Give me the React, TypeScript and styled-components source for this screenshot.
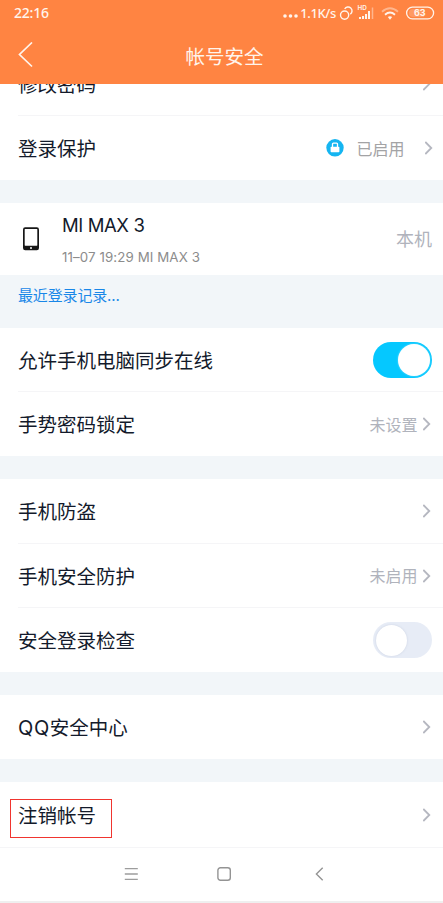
import React from 'react';
import styled, { createGlobalStyle } from 'styled-components';

const GlobalStyle = createGlobalStyle`
  * { box-sizing: border-box; }
  body {
    margin: 0;
    background: #f2f6f9;
    font-family: Inter, "Noto Sans CJK SC", sans-serif;
    color: #131a2b;
  }
  svg { display: block; flex: none; }
`;

const Screen = styled.div`
  width: 443px;
  height: 903px;
  overflow: hidden;
  display: flex;
  flex-direction: column;
`;

const Header = styled.header`
  flex: none;
  height: 84px;
  background: #ff8442;
  color: #fff4ec;
`;

const StatusBar = styled.div`
  height: 26px;
  padding: 0 7px 0 14px;
  display: flex;
  align-items: center;
  justify-content: space-between;
`;

const Clock = styled.span`
  font: 500 14px/26px "Noto Sans", sans-serif;
  letter-spacing: -0.2px;
`;

const StatusIcons = styled.div`
  display: flex;
  align-items: center;
`;

const Speed = styled.span`
  margin: 0 3px 0 1px;
  font: 500 13px/26px "Noto Sans", sans-serif;
  letter-spacing: -0.35px;
`;

const TitleBar = styled.div`
  height: 58px;
  padding: 0 18px;
  display: grid;
  grid-template-columns: 40px 1fr 40px;
  align-items: center;
`;

const Title = styled.h1`
  margin: 3px 0 0 6px;
  text-align: center;
  font-size: 19.5px;
  line-height: 28px;
  font-weight: 400;
`;

const ClippedRow = styled.div`
  flex: none;
  height: 31px;
  display: flex;
  flex-direction: column;
  justify-content: flex-end;
  overflow: hidden;
  background: #fff;
`;

const Group = styled.section<{ $gap?: number }>`
  flex: none;
  background: #fff;
  margin-bottom: ${({ $gap = 0 }) => $gap}px;
`;

const Row = styled.div<{ $height?: number }>`
  flex: none;
  height: ${({ $height = 64 }) => $height}px;
  padding: 0 12px 0 18px;
  display: flex;
  align-items: center;
  justify-content: space-between;
`;

const FirstRow = styled(Row)`
  height: 62px;
`;

const Divider = styled.div<{ $full?: boolean }>`
  height: 1px;
  margin-left: ${({ $full }) => ($full ? 0 : 18)}px;
  background: #f5f5f7;
`;

const Label = styled.span`
  padding-top: 2px;
  font-size: 19.5px;
  line-height: 28px;
  white-space: nowrap;
`;

const Latin = styled.span`
  font-size: 20px;
  letter-spacing: 0.6px;
`;

const Trailing = styled.div<{ $shift?: number }>`
  display: flex;
  align-items: center;
  margin-right: ${({ $shift = 0 }) => -$shift}px;
`;

const Value = styled.span<{ $before?: number; $gap?: number; $size?: number; $warm?: boolean }>`
  padding-top: 1px;
  font-size: ${({ $size = 16 }) => $size}px;
  line-height: 24px;
  color: ${({ $warm }) => ($warm ? '#a3a3a5' : '#b0b3bc')};
  margin: 0 ${({ $gap = 0 }) => $gap}px 0 ${({ $before = 0 }) => $before}px;
`;

const DeviceRow = styled(Row)`
  height: 72px;
  padding: 0 11px 0 22px;
`;

const DeviceInfo = styled.div`
  flex: 1;
  height: 72px;
  padding: 9px 0 0 22px;
`;

const DeviceName = styled.div`
  font-size: 18.5px;
  line-height: 26px;
  letter-spacing: -0.4px;
`;

const DeviceMeta = styled.div`
  margin-top: 7px;
  font-size: 13.3px;
  line-height: 24px;
  letter-spacing: 0.1px;
  color: #8c8c8c;
`;

const RecentLink = styled.a`
  flex: none;
  height: 53px;
  padding: 9px 18px;
  font-size: 15px;
  line-height: 24px;
  letter-spacing: -0.15px;
  color: #1987e8;
`;

const Switch = styled.div<{ $on?: boolean }>`
  width: 59px;
  height: 36px;
  margin-right: -1px;
  padding: ${({ $on }) => ($on ? '2px' : '2.5px')};
  display: flex;
  justify-content: ${({ $on }) => ($on ? 'flex-end' : 'flex-start')};
  border-radius: 18px;
  background: ${({ $on }) => ($on ? '#05c8ff' : '#e7ecf6')};
`;

const Knob = styled.span<{ $on?: boolean }>`
  width: ${({ $on }) => ($on ? 32 : 31)}px;
  height: ${({ $on }) => ($on ? 32 : 31)}px;
  border-radius: 50%;
  background: #fff;
  box-shadow: 0 0 2px ${({ $on }) => ($on ? 'rgba(255,255,255,.5)' : 'rgba(170,180,205,.5)')};
`;

const Highlight = styled.div`
  width: 102px;
  height: 39px;
  margin: 7px 0 0 -8px;
  padding: 0 0 6px 7px;
  display: flex;
  align-items: center;
  border: 1px solid #f0352f;
`;

const NavBar = styled.nav`
  flex: none;
  height: 53px;
  padding: 0 119px 2px 124px;
  display: grid;
  grid-template-columns: 93px 1fr 9px;
  align-items: center;
  background: #fff;
`;

const BottomEdge = styled.div`
  flex: none;
  height: 2px;
  background: #efefef;
`;

const Chevron = () => (
  <svg width="8" height="14" viewBox="0 0 8 14" fill="none" stroke="#b5b7c0" strokeWidth="1.8">
    <path d="M.3 1 6.3 7 .3 13" />
  </svg>
);

const BackIcon = () => (
  <svg width="16" height="26" viewBox="0 0 16 26" fill="none" stroke="currentColor" strokeWidth="1.7">
    <path d="M14 .5 1.5 12.5 14 24.5" />
  </svg>
);

const StatusGlyphs = () => (
  <svg width="97" height="20" viewBox="0 0 97 20" fill="none" stroke="currentColor">
    <circle cx="5.6" cy="12.1" r="4.1" strokeWidth="1.4" />
    <path d="M5.7 6A3.9 3.9 0 1 1 11.3 11.1" strokeWidth="1.4" />
    <text x="18.5" y="7.3" fontSize="6.3" fontWeight="600" fill="currentColor" stroke="none">HD</text>
    <path d="M21 14v2M24 13v3M27 11v5M30 8v8" strokeWidth="2" />
    <path d="M33.5 4.5V16" strokeWidth="1.5" opacity=".45" />
    <path d="M43 8.7q8-7 16 0" strokeWidth="1.8" opacity=".45" />
    <path d="M46 11.7q5-4.3 10 0" strokeWidth="1.9" />
    <path d="M48.8 14.1q2.2-1.5 4.4 0L51 16.7Z" fill="currentColor" stroke="none" />
    <rect x="67.6" y="4.2" width="27" height="11.6" rx="5.8" strokeWidth="1.3" />
    <path d="M70 10a4 4 0 0 1 4-4h11v8H74a4 4 0 0 1-4-4Z" fill="currentColor" opacity=".2" stroke="none" />
    <text x="80.8" y="13.2" textAnchor="middle" fontSize="9" fontWeight="700" fill="currentColor" stroke="none">63</text>
  </svg>
);

const Dots = () => (
  <svg width="16" height="20" viewBox="0 0 16 20" fill="currentColor">
    <circle cx="2" cy="13" r="1.8" />
    <circle cx="7.5" cy="13" r="1.8" />
    <circle cx="13" cy="13" r="1.8" />
  </svg>
);

const LockBadge = () => (
  <svg width="18" height="18" viewBox="0 0 18 18">
    <circle cx="9" cy="8.8" r="8.7" fill="#15b5f1" />
    <rect x="4.6" y="7.8" width="8.8" height="5.4" rx=".8" fill="#fff" />
    <path d="M6.5 8V5q0-.9.9-.9h3.2q.9 0 .9.9V8" fill="none" stroke="#fff" strokeWidth="1.3" />
  </svg>
);

const PhoneIcon = () => (
  <svg width="18" height="24" viewBox="0 0 18 24">
    <rect x="1" y=".2" width="16" height="23" rx="2.2" fill="#171717" />
    <rect x="2.7" y="1.9" width="12.6" height="16.8" rx=".4" fill="#fff" />
    <circle cx="9" cy="21" r="1" fill="#fff" />
  </svg>
);

const MenuIcon = () => (
  <svg width="14" height="14" viewBox="0 0 14 14" stroke="#9d9d9d" strokeWidth="1.3">
    <path d="M.8 1.7h13M.8 7h13M.8 12.3h13" />
  </svg>
);

const HomeIcon = () => (
  <svg width="14" height="14" viewBox="0 0 14 14" fill="none" stroke="#949494" strokeWidth="1.4">
    <rect x=".9" y=".8" width="12.4" height="12.4" rx="2.5" />
  </svg>
);

const NavBackIcon = () => (
  <svg width="9" height="14" viewBox="0 0 9 14" fill="none" stroke="#949494" strokeWidth="1.4">
    <path d="M7.7.7 1.4 7l6.3 6.3" />
  </svg>
);

export default function App() {
  return (
    <Screen>
      <GlobalStyle />
      <Header>
        <StatusBar>
          <Clock>22:16</Clock>
          <StatusIcons>
            <Dots />
            <Speed>1.1K/s</Speed>
            <StatusGlyphs />
          </StatusIcons>
        </StatusBar>
        <TitleBar>
          <BackIcon />
          <Title>帐号安全</Title>
        </TitleBar>
      </Header>

      <ClippedRow>
        <FirstRow>
          <Label>修改密码</Label>
          <Chevron />
        </FirstRow>
      </ClippedRow>
      <Group $gap={23}>
        <Divider />
        <Row>
          <Label>登录保护</Label>
          <Trailing $shift={1.5}>
            <LockBadge />
            <Value $warm $before={12} $gap={20}>已启用</Value>
            <Chevron />
          </Trailing>
        </Row>
      </Group>

      <Group>
        <DeviceRow>
          <PhoneIcon />
          <DeviceInfo>
            <DeviceName>MI MAX 3</DeviceName>
            <DeviceMeta>11–07 19:29 MI MAX 3</DeviceMeta>
          </DeviceInfo>
          <Value $size={18}>本机</Value>
        </DeviceRow>
      </Group>
      <RecentLink>最近登录记录...</RecentLink>

      <Group $gap={23}>
        <Row $height={63}>
          <Label>允许手机电脑同步在线</Label>
          <Switch $on>
            <Knob $on />
          </Switch>
        </Row>
        <Divider />
        <Row>
          <Label>手势密码锁定</Label>
          <Trailing>
            <Value $gap={5.5}>未设置</Value>
            <Chevron />
          </Trailing>
        </Row>
      </Group>

      <Group $gap={23}>
        <Row>
          <Label>手机防盗</Label>
          <Chevron />
        </Row>
        <Divider />
        <Row $height={63}>
          <Label>手机安全防护</Label>
          <Trailing>
            <Value $gap={5.5}>未启用</Value>
            <Chevron />
          </Trailing>
        </Row>
        <Divider />
        <Row>
          <Label>安全登录检查</Label>
          <Switch>
            <Knob />
          </Switch>
        </Row>
      </Group>

      <Group $gap={23}>
        <Row>
          <Label><Latin>QQ</Latin>安全中心</Label>
          <Chevron />
        </Row>
      </Group>

      <Group>
        <Row $height={65}>
          <Highlight>
            <Label>注销帐号</Label>
          </Highlight>
          <Chevron />
        </Row>
        <Divider $full />
      </Group>

      <NavBar>
        <MenuIcon />
        <HomeIcon />
        <NavBackIcon />
      </NavBar>
      <BottomEdge />
    </Screen>
  );
}
